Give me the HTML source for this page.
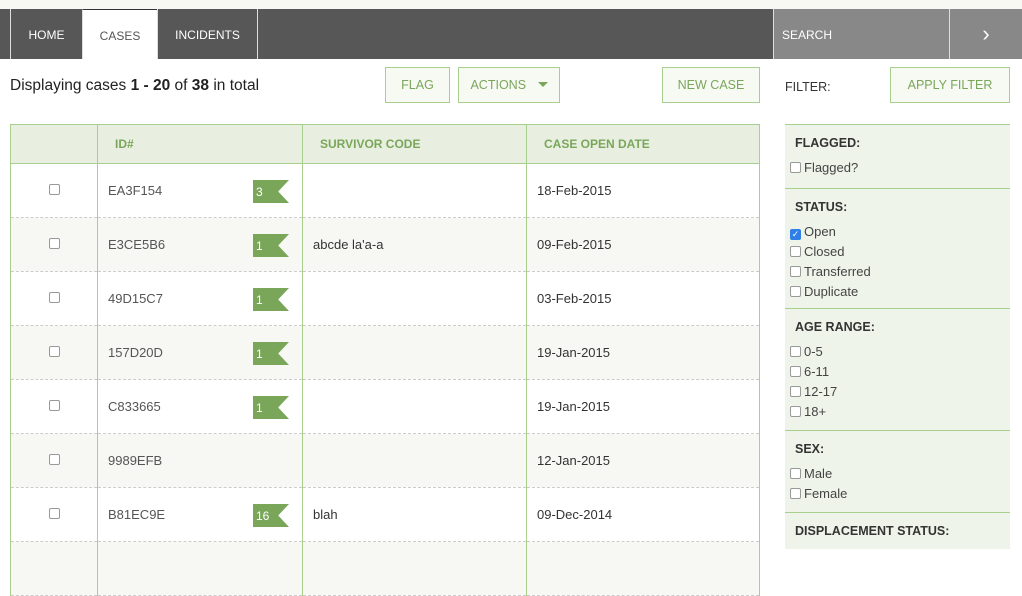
<!DOCTYPE html>
<html><head><style>
*{box-sizing:border-box;margin:0;padding:0}
body{width:1022px;height:549px;overflow:hidden;background:#fff;font-family:"Liberation Sans",Arial,sans-serif;position:relative;color:#333}
.abs{position:absolute}
.top{left:0;top:0;width:1022px;height:9px;background:#f7f8f3}
.nav{left:0;top:9px;width:1022px;height:50px;background:#575757}
.tab{top:9px;height:50px;color:#fff;font-size:12px;line-height:52px;text-align:center;border-left:1px solid #ddd}
.btn{height:36px;border:1px solid #a9cf8e;background:#f7f9f3;color:#7aa65a;font-size:12.5px;line-height:34px;text-align:center}
table{position:absolute;left:10px;top:124px;width:750px;border-collapse:collapse;font-size:13px}
th{background:#e8efe1;color:#7aa65a;font-size:12px;font-weight:bold;text-align:left;height:39px;padding-left:17px;border:1px solid #a9cf8e}
td{height:54px;border-bottom:1px dashed #ccc;border-left:1px solid #a9cf8e;border-right:1px solid #a9cf8e;padding-left:10px;position:relative}
tr:nth-child(odd) td{background:#f7f8f3}
.cb{width:11px;height:11px;border:1px solid #999;border-radius:2px;display:inline-block;background:#fff}
.flag{position:absolute;left:155px;top:16px;width:36px;height:23px;background:#7aa65a;color:#fff;font-size:12px;line-height:24px;padding-left:3px;clip-path:polygon(0 0,100% 0,70% 50%,100% 100%,0 100%)}
.f{left:785px;width:225px;background:#eef4e9;font-size:13px}
.sec{border-top:1px solid #a9cf8e;padding:11px 0 0 10px}
.sec h4{font-size:12.5px;margin-bottom:11px;color:#333}
.sec div{margin-left:-5px;height:20px;line-height:14px;color:#444}
.sec .cb{vertical-align:-1px;margin-right:3px}
.chk{background:#2f7fe6;border-color:#2f7fe6;color:#fff;font-size:9px;line-height:9px;text-align:center}
</style></head><body>
<div class="abs top"></div>
<div class="abs nav"></div>
<div class="abs tab" style="left:10px;width:72px;">HOME</div>
<div class="abs tab" style="left:82px;width:75px;background:#fff;color:#555;border-top:1px solid #333">CASES</div>
<div class="abs tab" style="left:157px;width:100px;">INCIDENTS</div>
<div class="abs tab" style="left:257px;width:1px;"></div>
<div class="abs" style="left:773px;top:9px;width:177px;height:50px;background:#888;border-left:1px solid #ddd;color:#fff;font-size:12px;line-height:52px;padding-left:8px">SEARCH</div>
<div class="abs" style="left:949px;top:9px;width:73px;height:50px;background:#888;border-left:1px solid #ddd;color:#fff;font-size:22px;line-height:50px;text-align:center">›</div>
<div class="abs" style="left:10px;top:77px;font-size:15.5px;color:#222">Displaying cases <b>1 - 20</b> of <b>38</b> in total</div>
<div class="abs btn" style="left:385px;top:67px;width:65px">FLAG</div>
<div class="abs btn" style="left:458px;top:67px;width:102px">ACTIONS <span style="display:inline-block;margin-left:8px;border-left:5px solid transparent;border-right:5px solid transparent;border-top:5px solid #7aa65a;vertical-align:2px"></span></div>
<div class="abs btn" style="left:662px;top:67px;width:98px">NEW CASE</div>
<div class="abs" style="left:785px;top:80px;font-size:12.5px;color:#333">FILTER:</div>
<div class="abs btn" style="left:890px;top:67px;width:120px">APPLY FILTER</div>
<table>
<tr><th style="width:87px"></th><th style="width:205px">ID#</th><th style="width:224px">SURVIVOR CODE</th><th>CASE OPEN DATE</th></tr>
<tr><td style="text-align:center;padding:0"><span class="cb"></span></td><td style="color:#555">EA3F154<div class="flag">3</div></td><td></td><td>18-Feb-2015</td></tr>
<tr><td style="text-align:center;padding:0"><span class="cb"></span></td><td style="color:#555">E3CE5B6<div class="flag">1</div></td><td>abcde la'a-a</td><td>09-Feb-2015</td></tr>
<tr><td style="text-align:center;padding:0"><span class="cb"></span></td><td style="color:#555">49D15C7<div class="flag">1</div></td><td></td><td>03-Feb-2015</td></tr>
<tr><td style="text-align:center;padding:0"><span class="cb"></span></td><td style="color:#555">157D20D<div class="flag">1</div></td><td></td><td>19-Jan-2015</td></tr>
<tr><td style="text-align:center;padding:0"><span class="cb"></span></td><td style="color:#555">C833665<div class="flag">1</div></td><td></td><td>19-Jan-2015</td></tr>
<tr><td style="text-align:center;padding:0"><span class="cb"></span></td><td style="color:#555">9989EFB</td><td></td><td>12-Jan-2015</td></tr>
<tr><td style="text-align:center;padding:0"><span class="cb"></span></td><td style="color:#555">B81EC9E<div class="flag">16</div></td><td>blah</td><td>09-Dec-2014</td></tr>
<tr><td></td><td></td><td></td><td></td></tr>
</table>
<div class="abs f" style="top:124px;height:425px">
<div class="sec" style="height:64px"><h4>FLAGGED:</h4><div><span class="cb"></span>Flagged?</div></div>
<div class="sec" style="height:120px"><h4>STATUS:</h4><div><span class="cb chk">✓</span>Open</div><div><span class="cb"></span>Closed</div><div><span class="cb"></span>Transferred</div><div><span class="cb"></span>Duplicate</div></div>
<div class="sec" style="height:122px"><h4>AGE RANGE:</h4><div><span class="cb"></span>0-5</div><div><span class="cb"></span>6-11</div><div><span class="cb"></span>12-17</div><div><span class="cb"></span>18+</div></div>
<div class="sec" style="height:82px"><h4>SEX:</h4><div><span class="cb"></span>Male</div><div><span class="cb"></span>Female</div></div>
<div class="sec"><h4>DISPLACEMENT STATUS:</h4></div>
</div>
</body></html>
